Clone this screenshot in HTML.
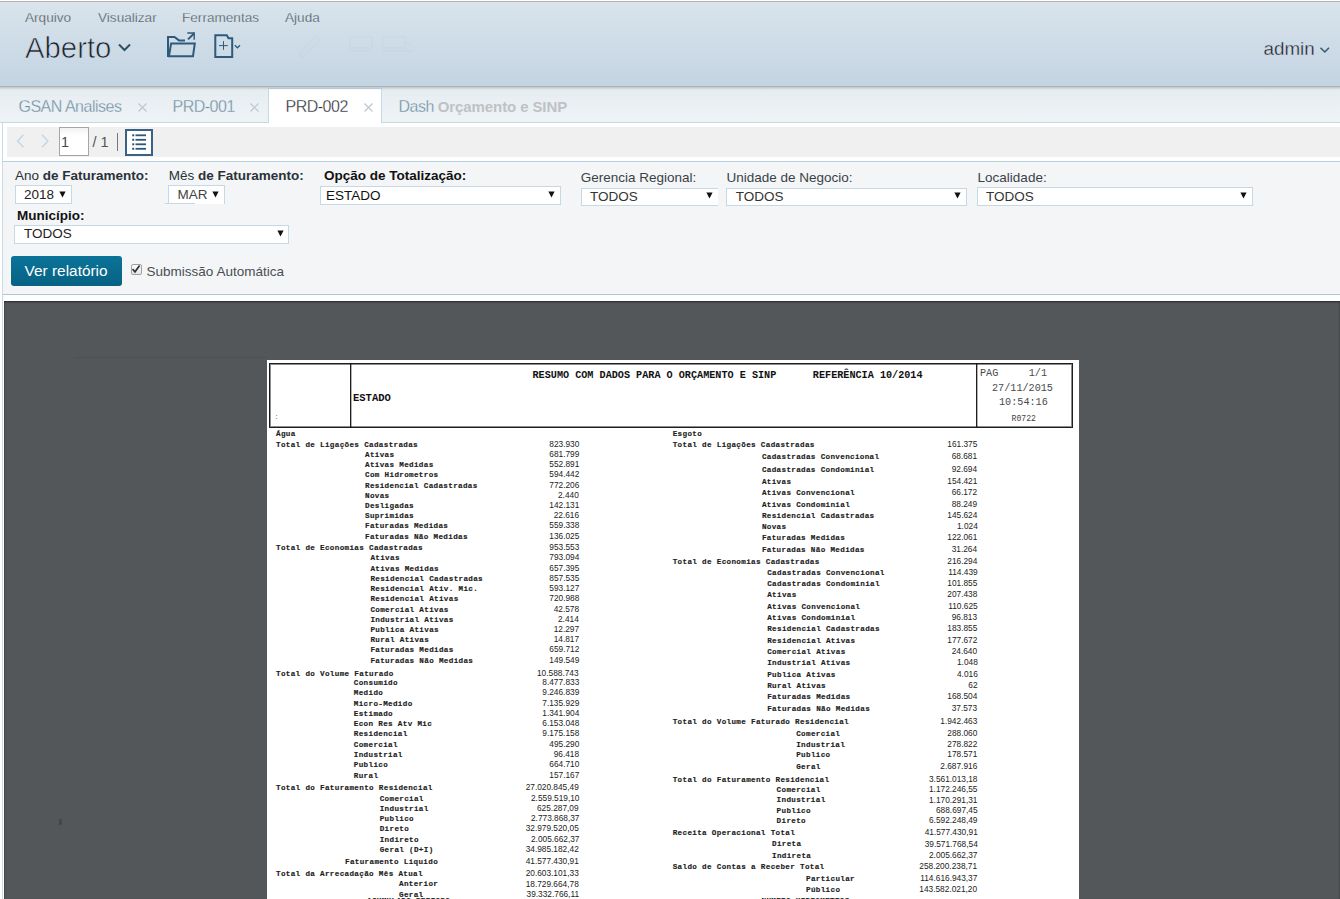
<!DOCTYPE html>
<html><head><meta charset="utf-8">
<style>
*{margin:0;padding:0;box-sizing:border-box}
html,body{width:1340px;height:899px;overflow:hidden;background:#fff;font-family:"Liberation Sans",sans-serif}
.a{position:absolute;white-space:nowrap;line-height:1}
#hdr{position:absolute;left:0;top:1px;width:1340px;height:85px;border-top:1px solid #b6b3b3;background:linear-gradient(#d9e4ec,#c3d4e2)}
#shadow{position:absolute;left:0;top:86px;width:1340px;height:4px;background:linear-gradient(rgba(110,118,124,.6),rgba(110,118,124,.25) 40%,rgba(110,118,124,0))}
.menu{position:absolute;top:8px;font-size:13.6px;color:#555c61}
#tabs{position:absolute;left:0;top:86px;width:1340px;height:37px;background:linear-gradient(#e5ecf0,#eef3f6);border-bottom:1px solid #c3d9e5}
.tab{position:absolute;font-size:15px;color:#6d8da2;top:9px}
.x{position:absolute;width:9px;height:9px;top:17px}
#panel{position:absolute;left:2px;top:123px;width:1338px;height:776px;border-left:1px solid #c8dce8;background:#fff}
#tb{position:absolute;left:7px;top:127px;width:1333px;height:30px;background:#f0f0f0}
#flt{position:absolute;left:3px;top:161px;width:1337px;height:134px;background:#f3f5f7;border-top:1px solid #b7d0de;border-bottom:1px solid #a9c9d8}
.lbl{position:absolute;font-size:13.5px;color:#222;font-weight:bold}
.lbl2{position:absolute;font-size:14px;color:#3a4248}
.sel{position:absolute;background:#fff;border:1px solid #c6d7e5;font-size:13.5px;color:#222}
.sel span{position:absolute}
.arr{position:absolute;top:4px;font-size:9px;color:#111}
#dark{position:absolute;left:4px;top:301px;width:1336px;height:598px;background:#53575a;box-shadow:inset 0 1px 2px rgba(0,0,0,.55)}
</style></head><body>
<div id="hdr"></div>
<svg class="a" style="left:117px;top:42px" width="16" height="11" viewBox="0 0 16 11"><path d="M2 2.5 L7.5 8 L13 2.5" fill="none" stroke="#2d5068" stroke-width="2"/></svg>
<svg class="a" style="left:160px;top:28px" width="40" height="34" viewBox="0 0 40 34">
<g fill="none" stroke="#2f5a7a" stroke-width="2">
<path d="M8 29 V9 H14.5 L19 12.4 H25"/>
<path d="M8 28.2 H33 L34.8 15.4 H11.1 L9 28"/>
<path d="M28 11.4 L34.3 5.2"/>
</g>
<path d="M27.3 4.3 H34.9 V11.8 H33.5 V5.7 H27.3Z" fill="#2f5a7a"/>
</svg>
<svg class="a" style="left:212px;top:32px" width="32" height="28" viewBox="0 0 32 28">
<g fill="none" stroke="#2f5a7a">
<path d="M3.3 25 V3.2 H14.8 L16.5 6.2 H20.2 V25 Z" stroke-width="2"/>
<path d="M7 13.6 H15.8 M11.5 9.1 V17.8" stroke-width="1"/>
<path d="M22.8 13.3 L25.4 15.8 L28 13.3" stroke-width="1.3"/>
</g>
</svg>
<svg class="a" style="left:1318px;top:45px" width="13" height="10" viewBox="0 0 13 10"><path d="M2.5 2.8 L6.8 7 L11 2.8" fill="none" stroke="#3b5b72" stroke-width="1.6"/></svg>
<svg class="a" style="left:290px;top:25px" width="130" height="40" viewBox="0 0 130 40"><g fill="none" stroke="rgba(60,90,110,.018)" stroke-width="2"><path d="M9 30 L25 11 L30 15 L13 32 Z"/><rect x="60" y="12" width="22" height="11"/><path d="M59 26 H83"/><rect x="93" y="12" width="22" height="11"/><path d="M92 26 H122 M115 16 L122 21"/></g></svg>
<div id="tabs">
 <svg class="x" style="left:138px" viewBox="0 0 9 9"><path d="M.5 .5 L8.5 8.5 M8.5 .5 L.5 8.5" stroke="#b9c7d1" stroke-width="1.1"/></svg>
 <svg class="x" style="left:250px" viewBox="0 0 9 9"><path d="M.5 .5 L8.5 8.5 M8.5 .5 L.5 8.5" stroke="#b9c7d1" stroke-width="1.1"/></svg>
 <div class="a" style="left:268px;top:2px;width:114px;height:36px;background:#fff;border:1px solid #c8d9e4;border-bottom:none"></div>
 <svg class="x" style="left:363.5px" viewBox="0 0 9 9"><path d="M.5 .5 L8.5 8.5 M8.5 .5 L.5 8.5" stroke="#b9c7d1" stroke-width="1.1"/></svg>
</div>
<div id="shadow"></div>
<div id="panel"></div>
<div id="tb"></div>
<svg class="a" style="left:14px;top:133px" width="40" height="16" viewBox="0 0 40 16"><path d="M9.5 1.8 L3.6 8 L9.5 14.2 M28 1.8 L33.9 8 L28 14.2" fill="none" stroke="#c3d8e4" stroke-width="1.5"/></svg>
<div class="a" style="left:59px;top:127px;width:30px;height:29px;background:linear-gradient(#f2f2f2,#fff 30%);border:1px solid #a6a6a6"></div>
<div class="a" style="left:117px;top:133px;width:1px;height:18px;background:#777"></div>
<div class="a" style="left:125px;top:129px;width:28px;height:27px;border:2px solid #3a6285;background:#fff"></div>
<svg class="a" style="left:129px;top:133px" width="22" height="20" viewBox="0 0 22 20"><g fill="#2d5678"><rect x="3.2" y="1.3" width="2" height="2"/><rect x="6.5" y="1.4" width="10.5" height="1.8"/><rect x="3.2" y="5.8" width="2" height="2"/><rect x="6.5" y="5.9" width="10.5" height="1.8"/><rect x="3.2" y="10.3" width="2" height="2"/><rect x="6.5" y="10.4" width="10.5" height="1.8"/><rect x="3.2" y="14.8" width="2" height="2"/><rect x="6.5" y="14.9" width="10.5" height="1.8"/></g></svg>
<div id="flt"></div>

<div class="a" style="top:10.69px;font-size:13.6px;font-family:'Liberation Sans',sans-serif;left:25.00px;color:#4f565b;-webkit-text-stroke:.25px #d6e2ea">Arquivo</div>
<div class="a" style="top:10.69px;font-size:13.6px;font-family:'Liberation Sans',sans-serif;left:98.00px;color:#4f565b;-webkit-text-stroke:.25px #d6e2ea">Visualizar</div>
<div class="a" style="top:10.69px;font-size:13.6px;font-family:'Liberation Sans',sans-serif;left:182.00px;color:#4f565b;-webkit-text-stroke:.25px #d6e2ea">Ferramentas</div>
<div class="a" style="top:10.69px;font-size:13.6px;font-family:'Liberation Sans',sans-serif;left:285.00px;color:#4f565b;-webkit-text-stroke:.25px #d6e2ea">Ajuda</div>
<div class="a" style="top:32.80px;font-size:29.3px;font-family:'Liberation Sans',sans-serif;left:25.00px;color:#1c2126;-webkit-text-stroke:.7px #d0dce7">Aberto</div>
<div class="a" style="top:40.29px;font-size:18.8px;font-family:'Liberation Sans',sans-serif;left:1263.50px;color:#1f2428;-webkit-text-stroke:.35px #ccd9e5">admin</div>
<div class="a" style="top:98.86px;font-size:16px;font-family:'Liberation Sans',sans-serif;left:18.50px;color:#6d8da2;letter-spacing:-.5px;-webkit-text-stroke:.3px #e9eff3">GSAN Analises</div>
<div class="a" style="top:98.86px;font-size:16px;font-family:'Liberation Sans',sans-serif;left:172.50px;color:#6d8da2;letter-spacing:-.5px;-webkit-text-stroke:.3px #e9eff3">PRD-001</div>
<div class="a" style="top:98.86px;font-size:16px;font-family:'Liberation Sans',sans-serif;left:285.50px;color:#1f2a32;letter-spacing:-.5px;-webkit-text-stroke:.3px #fff">PRD-002</div>
<div class="a" style="top:98.86px;font-size:16px;font-family:'Liberation Sans',sans-serif;left:398.50px;color:#6d8da2;letter-spacing:-.5px;-webkit-text-stroke:.3px #e9eff3">Dash <b style="color:#bfc2c5;letter-spacing:-.1px;font-size:15px;-webkit-text-stroke:0">Orçamento e SINP</b></div>
<div class="a" style="top:134.93px;font-size:14.5px;font-family:'Liberation Sans',sans-serif;left:61.00px;color:#4a4a4a;">1</div>
<div class="a" style="top:134.93px;font-size:14.5px;font-family:'Liberation Sans',sans-serif;left:92.50px;color:#555;">/ 1</div>
<div class="a" style="top:168.97px;font-size:13.5px;font-family:'Liberation Sans',sans-serif;left:15.00px;color:#2a3238;">Ano <b>de Faturamento:</b></div>
<div class="a" style="top:169.17px;font-size:13.5px;font-family:'Liberation Sans',sans-serif;left:168.80px;color:#2a3238;">Mês <b>de Faturamento:</b></div>
<div class="a" style="top:169.17px;font-size:13.5px;font-family:'Liberation Sans',sans-serif;left:324.00px;color:#111;"><b>Opção de Totalização:</b></div>
<div class="a" style="top:209.17px;font-size:13.5px;font-family:'Liberation Sans',sans-serif;left:17.00px;color:#111;"><b>Município:</b></div>
<div class="a" style="top:171.47px;font-size:13.5px;font-family:'Liberation Sans',sans-serif;left:580.70px;color:#3a4248;">Gerencia Regional:</div>
<div class="a" style="top:171.47px;font-size:13.5px;font-family:'Liberation Sans',sans-serif;left:726.50px;color:#3a4248;">Unidade de Negocio:</div>
<div class="a" style="top:171.47px;font-size:13.5px;font-family:'Liberation Sans',sans-serif;left:977.60px;color:#3a4248;">Localidade:</div>
<div class="a" style="left:15px;top:185px;width:57px;height:19px;background:#fff;border:1px solid #c6d7e5;"></div>
<div class="a" style="top:187.57px;font-size:13.5px;font-family:'Liberation Sans',sans-serif;left:24.00px;color:#222;">2018</div>
<svg class="a" style="left:58.5px;top:190.5px" width="7" height="7" viewBox="0 0 7 7"><path d="M0.4 0.6 H6.6 L3.5 6.6Z" fill="#111"/></svg>
<div class="a" style="left:168px;top:185px;width:57px;height:18.5px;background:#fff;border:1px solid #c6d7e5;border-bottom:none"></div>
<div class="a" style="left:165px;top:203px;width:30px;height:1px;background:#c6d7e5"></div>
<div class="a" style="top:187.57px;font-size:13.5px;font-family:'Liberation Sans',sans-serif;left:177.50px;color:#444;">MAR</div>
<svg class="a" style="left:212px;top:190.5px" width="7" height="7" viewBox="0 0 7 7"><path d="M0.4 0.6 H6.6 L3.5 6.6Z" fill="#111"/></svg>
<div class="a" style="left:320px;top:186px;width:241px;height:19px;background:#fff;border:1px solid #c6d7e5;"></div>
<div class="a" style="top:188.57px;font-size:13.5px;font-family:'Liberation Sans',sans-serif;left:326.00px;color:#111;">ESTADO</div>
<svg class="a" style="left:547.5px;top:191.0px" width="7" height="7" viewBox="0 0 7 7"><path d="M0.4 0.6 H6.6 L3.5 6.6Z" fill="#111"/></svg>
<div class="a" style="left:580.5px;top:187.5px;width:137.5px;height:18.5px;background:#fff;border:1px solid #c6d7e5;border-right:none"></div>
<div class="a" style="top:189.57px;font-size:13.5px;font-family:'Liberation Sans',sans-serif;left:590.00px;color:#333;">TODOS</div>
<svg class="a" style="left:705.5px;top:192.0px" width="7" height="7" viewBox="0 0 7 7"><path d="M0.4 0.6 H6.6 L3.5 6.6Z" fill="#111"/></svg>
<div class="a" style="left:726px;top:187.5px;width:241px;height:18.5px;background:#fff;border:1px solid #c6d7e5;"></div>
<div class="a" style="top:189.57px;font-size:13.5px;font-family:'Liberation Sans',sans-serif;left:735.70px;color:#333;">TODOS</div>
<svg class="a" style="left:953.5px;top:192.0px" width="7" height="7" viewBox="0 0 7 7"><path d="M0.4 0.6 H6.6 L3.5 6.6Z" fill="#111"/></svg>
<div class="a" style="left:977px;top:187px;width:276px;height:19px;background:#fff;border:1px solid #c6d7e5;"></div>
<div class="a" style="top:189.57px;font-size:13.5px;font-family:'Liberation Sans',sans-serif;left:986.00px;color:#333;">TODOS</div>
<svg class="a" style="left:1239.5px;top:191.5px" width="7" height="7" viewBox="0 0 7 7"><path d="M0.4 0.6 H6.6 L3.5 6.6Z" fill="#111"/></svg>
<div class="a" style="left:14px;top:225px;width:275px;height:19px;background:#fff;border:1px solid #c6d7e5;"></div>
<div class="a" style="top:227.17px;font-size:13.5px;font-family:'Liberation Sans',sans-serif;left:24.00px;color:#222;">TODOS</div>
<svg class="a" style="left:276.5px;top:229.5px" width="7" height="7" viewBox="0 0 7 7"><path d="M0.4 0.6 H6.6 L3.5 6.6Z" fill="#111"/></svg>
<div class="a" style="left:11px;top:256px;width:111px;height:30px;border-radius:3px;background:linear-gradient(#0b7399,#076283)"></div>
<div class="a" style="top:262.86px;font-size:15.4px;font-family:'Liberation Sans',sans-serif;left:24.60px;color:#fff;">Ver relatório</div>
<div class="a" style="left:130.5px;top:264px;width:11px;height:11px;border:1px solid #a0a0a0;border-radius:2px;background:linear-gradient(#fdfdfd,#e6e6e6)"></div>
<svg class="a" style="left:130px;top:263px" width="12" height="12" viewBox="0 0 12 12"><path d="M2.6 6.2 L5 8.8 L9.6 2.4" fill="none" stroke="#333" stroke-width="1.7"/></svg>
<div class="a" style="top:264.57px;font-size:13.5px;font-family:'Liberation Sans',sans-serif;left:146.60px;color:#4a4f53;">Submissão Automática</div>
<div id="dark"></div>
<div class="a" style="left:74px;top:357px;width:193px;height:1px;background:#4d5154"></div>
<div class="a" style="left:59px;top:819px;width:3px;height:6px;background:#44474a"></div>
<div class="a" style="left:267px;top:360px;width:812px;height:539px;background:#fff"></div>
<div class="a" style="left:269px;top:363px;width:804px;height:65px;border:1px solid #1e1e1e;box-shadow:inset 0 0 0 1px rgba(0,0,0,.45)"></div>
<div class="a" style="left:350px;top:363px;width:1px;height:65px;background:#1e1e1e;box-shadow:1px 0 0 rgba(0,0,0,.3)"></div>
<div class="a" style="left:976px;top:363px;width:1px;height:65px;background:#1e1e1e;box-shadow:1px 0 0 rgba(0,0,0,.3)"></div>
<div class="a" style="top:413.64px;font-size:7px;font-family:'Liberation Mono',monospace;left:274.50px;color:#777;">:</div>
<div class="a" style="top:393.46px;font-size:10.5px;font-family:'Liberation Mono',monospace;left:353.00px;font-weight:bold;color:#111;">ESTADO</div>
<div class="a" style="top:370.91px;font-size:10.17px;font-family:'Liberation Mono',monospace;left:532.50px;font-weight:bold;color:#111;white-space:pre">RESUMO COM DADOS PARA O ORÇAMENTO E SINP      REFERÊNCIA 10/2014</div>
<div class="a" style="top:369.21px;font-size:10.17px;font-family:'Liberation Mono',monospace;left:980.00px;color:#4a4a4a;white-space:pre">PAG     1/1</div>
<div class="a" style="top:383.71px;font-size:10.17px;font-family:'Liberation Mono',monospace;left:992.00px;color:#4a4a4a;">27/11/2015</div>
<div class="a" style="top:398.21px;font-size:10.17px;font-family:'Liberation Mono',monospace;left:999.00px;color:#4a4a4a;">10:54:16</div>
<div class="a" style="top:414.74px;font-size:8.17px;font-family:'Liberation Mono',monospace;left:1011.50px;color:#444;">R0722</div>
<div class="a" style="top:431.18px;font-size:7.6px;font-family:'Liberation Mono',monospace;left:276.00px;font-weight:bold;color:#1c1c1c;letter-spacing:.34px;-webkit-text-stroke:.15px #1c1c1c">Água</div>
<div class="a" style="top:441.68px;font-size:7.6px;font-family:'Liberation Mono',monospace;left:276.00px;font-weight:bold;color:#1c1c1c;letter-spacing:.34px;-webkit-text-stroke:.15px #1c1c1c">Total de Ligações Cadastradas</div>
<div class="a" style="top:438.76px;font-size:9.5px;font-family:'Liberation Sans',sans-serif;right:761.00px;color:#222;transform:scaleX(.874);transform-origin:100% 50%">823.930</div>
<div class="a" style="top:451.88px;font-size:7.6px;font-family:'Liberation Mono',monospace;left:365.00px;font-weight:bold;color:#1c1c1c;letter-spacing:.34px;-webkit-text-stroke:.15px #1c1c1c">Ativas</div>
<div class="a" style="top:448.96px;font-size:9.5px;font-family:'Liberation Sans',sans-serif;right:761.00px;color:#222;transform:scaleX(.874);transform-origin:100% 50%">681.799</div>
<div class="a" style="top:461.68px;font-size:7.6px;font-family:'Liberation Mono',monospace;left:365.00px;font-weight:bold;color:#1c1c1c;letter-spacing:.34px;-webkit-text-stroke:.15px #1c1c1c">Ativas Medidas</div>
<div class="a" style="top:458.76px;font-size:9.5px;font-family:'Liberation Sans',sans-serif;right:761.00px;color:#222;transform:scaleX(.874);transform-origin:100% 50%">552.891</div>
<div class="a" style="top:471.88px;font-size:7.6px;font-family:'Liberation Mono',monospace;left:365.00px;font-weight:bold;color:#1c1c1c;letter-spacing:.34px;-webkit-text-stroke:.15px #1c1c1c">Com Hidrometros</div>
<div class="a" style="top:468.96px;font-size:9.5px;font-family:'Liberation Sans',sans-serif;right:761.00px;color:#222;transform:scaleX(.874);transform-origin:100% 50%">594.442</div>
<div class="a" style="top:482.63px;font-size:7.6px;font-family:'Liberation Mono',monospace;left:365.00px;font-weight:bold;color:#1c1c1c;letter-spacing:.34px;-webkit-text-stroke:.15px #1c1c1c">Residencial Cadastradas</div>
<div class="a" style="top:479.71px;font-size:9.5px;font-family:'Liberation Sans',sans-serif;right:761.00px;color:#222;transform:scaleX(.874);transform-origin:100% 50%">772.206</div>
<div class="a" style="top:493.08px;font-size:7.6px;font-family:'Liberation Mono',monospace;left:365.00px;font-weight:bold;color:#1c1c1c;letter-spacing:.34px;-webkit-text-stroke:.15px #1c1c1c">Novas</div>
<div class="a" style="top:490.16px;font-size:9.5px;font-family:'Liberation Sans',sans-serif;right:761.00px;color:#222;transform:scaleX(.874);transform-origin:100% 50%">2.440</div>
<div class="a" style="top:502.68px;font-size:7.6px;font-family:'Liberation Mono',monospace;left:365.00px;font-weight:bold;color:#1c1c1c;letter-spacing:.34px;-webkit-text-stroke:.15px #1c1c1c">Desligadas</div>
<div class="a" style="top:499.76px;font-size:9.5px;font-family:'Liberation Sans',sans-serif;right:761.00px;color:#222;transform:scaleX(.874);transform-origin:100% 50%">142.131</div>
<div class="a" style="top:512.68px;font-size:7.6px;font-family:'Liberation Mono',monospace;left:365.00px;font-weight:bold;color:#1c1c1c;letter-spacing:.34px;-webkit-text-stroke:.15px #1c1c1c">Suprimidas</div>
<div class="a" style="top:509.76px;font-size:9.5px;font-family:'Liberation Sans',sans-serif;right:761.00px;color:#222;transform:scaleX(.874);transform-origin:100% 50%">22.616</div>
<div class="a" style="top:523.38px;font-size:7.6px;font-family:'Liberation Mono',monospace;left:365.00px;font-weight:bold;color:#1c1c1c;letter-spacing:.34px;-webkit-text-stroke:.15px #1c1c1c">Faturadas Medidas</div>
<div class="a" style="top:520.46px;font-size:9.5px;font-family:'Liberation Sans',sans-serif;right:761.00px;color:#222;transform:scaleX(.874);transform-origin:100% 50%">559.338</div>
<div class="a" style="top:534.08px;font-size:7.6px;font-family:'Liberation Mono',monospace;left:365.00px;font-weight:bold;color:#1c1c1c;letter-spacing:.34px;-webkit-text-stroke:.15px #1c1c1c">Faturadas Não Medidas</div>
<div class="a" style="top:531.16px;font-size:9.5px;font-family:'Liberation Sans',sans-serif;right:761.00px;color:#222;transform:scaleX(.874);transform-origin:100% 50%">136.025</div>
<div class="a" style="top:544.58px;font-size:7.6px;font-family:'Liberation Mono',monospace;left:276.00px;font-weight:bold;color:#1c1c1c;letter-spacing:.34px;-webkit-text-stroke:.15px #1c1c1c">Total de Economias Cadastradas</div>
<div class="a" style="top:541.66px;font-size:9.5px;font-family:'Liberation Sans',sans-serif;right:761.00px;color:#222;transform:scaleX(.874);transform-origin:100% 50%">953.553</div>
<div class="a" style="top:554.98px;font-size:7.6px;font-family:'Liberation Mono',monospace;left:370.40px;font-weight:bold;color:#1c1c1c;letter-spacing:.34px;-webkit-text-stroke:.15px #1c1c1c">Ativas</div>
<div class="a" style="top:552.06px;font-size:9.5px;font-family:'Liberation Sans',sans-serif;right:761.00px;color:#222;transform:scaleX(.874);transform-origin:100% 50%">793.094</div>
<div class="a" style="top:565.68px;font-size:7.6px;font-family:'Liberation Mono',monospace;left:370.40px;font-weight:bold;color:#1c1c1c;letter-spacing:.34px;-webkit-text-stroke:.15px #1c1c1c">Ativas Medidas</div>
<div class="a" style="top:562.76px;font-size:9.5px;font-family:'Liberation Sans',sans-serif;right:761.00px;color:#222;transform:scaleX(.874);transform-origin:100% 50%">657.395</div>
<div class="a" style="top:575.88px;font-size:7.6px;font-family:'Liberation Mono',monospace;left:370.40px;font-weight:bold;color:#1c1c1c;letter-spacing:.34px;-webkit-text-stroke:.15px #1c1c1c">Residencial Cadastradas</div>
<div class="a" style="top:572.96px;font-size:9.5px;font-family:'Liberation Sans',sans-serif;right:761.00px;color:#222;transform:scaleX(.874);transform-origin:100% 50%">857.535</div>
<div class="a" style="top:585.68px;font-size:7.6px;font-family:'Liberation Mono',monospace;left:370.40px;font-weight:bold;color:#1c1c1c;letter-spacing:.34px;-webkit-text-stroke:.15px #1c1c1c">Residencial Ativ. Mic.</div>
<div class="a" style="top:582.76px;font-size:9.5px;font-family:'Liberation Sans',sans-serif;right:761.00px;color:#222;transform:scaleX(.874);transform-origin:100% 50%">593.127</div>
<div class="a" style="top:596.28px;font-size:7.6px;font-family:'Liberation Mono',monospace;left:370.40px;font-weight:bold;color:#1c1c1c;letter-spacing:.34px;-webkit-text-stroke:.15px #1c1c1c">Residencial Ativas</div>
<div class="a" style="top:593.36px;font-size:9.5px;font-family:'Liberation Sans',sans-serif;right:761.00px;color:#222;transform:scaleX(.874);transform-origin:100% 50%">720.988</div>
<div class="a" style="top:606.68px;font-size:7.6px;font-family:'Liberation Mono',monospace;left:370.40px;font-weight:bold;color:#1c1c1c;letter-spacing:.34px;-webkit-text-stroke:.15px #1c1c1c">Comercial Ativas</div>
<div class="a" style="top:603.76px;font-size:9.5px;font-family:'Liberation Sans',sans-serif;right:761.00px;color:#222;transform:scaleX(.874);transform-origin:100% 50%">42.578</div>
<div class="a" style="top:616.88px;font-size:7.6px;font-family:'Liberation Mono',monospace;left:370.40px;font-weight:bold;color:#1c1c1c;letter-spacing:.34px;-webkit-text-stroke:.15px #1c1c1c">Industrial Ativas</div>
<div class="a" style="top:613.96px;font-size:9.5px;font-family:'Liberation Sans',sans-serif;right:761.00px;color:#222;transform:scaleX(.874);transform-origin:100% 50%">2.414</div>
<div class="a" style="top:626.68px;font-size:7.6px;font-family:'Liberation Mono',monospace;left:370.40px;font-weight:bold;color:#1c1c1c;letter-spacing:.34px;-webkit-text-stroke:.15px #1c1c1c">Publica Ativas</div>
<div class="a" style="top:623.76px;font-size:9.5px;font-family:'Liberation Sans',sans-serif;right:761.00px;color:#222;transform:scaleX(.874);transform-origin:100% 50%">12.297</div>
<div class="a" style="top:637.38px;font-size:7.6px;font-family:'Liberation Mono',monospace;left:370.40px;font-weight:bold;color:#1c1c1c;letter-spacing:.34px;-webkit-text-stroke:.15px #1c1c1c">Rural Ativas</div>
<div class="a" style="top:634.46px;font-size:9.5px;font-family:'Liberation Sans',sans-serif;right:761.00px;color:#222;transform:scaleX(.874);transform-origin:100% 50%">14.817</div>
<div class="a" style="top:647.38px;font-size:7.6px;font-family:'Liberation Mono',monospace;left:370.40px;font-weight:bold;color:#1c1c1c;letter-spacing:.34px;-webkit-text-stroke:.15px #1c1c1c">Faturadas Medidas</div>
<div class="a" style="top:644.46px;font-size:9.5px;font-family:'Liberation Sans',sans-serif;right:761.00px;color:#222;transform:scaleX(.874);transform-origin:100% 50%">659.712</div>
<div class="a" style="top:657.88px;font-size:7.6px;font-family:'Liberation Mono',monospace;left:370.40px;font-weight:bold;color:#1c1c1c;letter-spacing:.34px;-webkit-text-stroke:.15px #1c1c1c">Faturadas Não Medidas</div>
<div class="a" style="top:654.96px;font-size:9.5px;font-family:'Liberation Sans',sans-serif;right:761.00px;color:#222;transform:scaleX(.874);transform-origin:100% 50%">149.549</div>
<div class="a" style="top:670.58px;font-size:7.6px;font-family:'Liberation Mono',monospace;left:276.00px;font-weight:bold;color:#1c1c1c;letter-spacing:.34px;-webkit-text-stroke:.15px #1c1c1c">Total do Volume Faturado</div>
<div class="a" style="top:667.66px;font-size:9.5px;font-family:'Liberation Sans',sans-serif;right:761.00px;color:#222;transform:scaleX(.874);transform-origin:100% 50%">10.588.743</div>
<div class="a" style="top:679.88px;font-size:7.6px;font-family:'Liberation Mono',monospace;left:353.80px;font-weight:bold;color:#1c1c1c;letter-spacing:.34px;-webkit-text-stroke:.15px #1c1c1c">Consumido</div>
<div class="a" style="top:676.96px;font-size:9.5px;font-family:'Liberation Sans',sans-serif;right:761.00px;color:#222;transform:scaleX(.874);transform-origin:100% 50%">8.477.833</div>
<div class="a" style="top:690.38px;font-size:7.6px;font-family:'Liberation Mono',monospace;left:353.80px;font-weight:bold;color:#1c1c1c;letter-spacing:.34px;-webkit-text-stroke:.15px #1c1c1c">Medido</div>
<div class="a" style="top:687.46px;font-size:9.5px;font-family:'Liberation Sans',sans-serif;right:761.00px;color:#222;transform:scaleX(.874);transform-origin:100% 50%">9.246.839</div>
<div class="a" style="top:700.98px;font-size:7.6px;font-family:'Liberation Mono',monospace;left:353.80px;font-weight:bold;color:#1c1c1c;letter-spacing:.34px;-webkit-text-stroke:.15px #1c1c1c">Micro-Medido</div>
<div class="a" style="top:698.06px;font-size:9.5px;font-family:'Liberation Sans',sans-serif;right:761.00px;color:#222;transform:scaleX(.874);transform-origin:100% 50%">7.135.929</div>
<div class="a" style="top:711.28px;font-size:7.6px;font-family:'Liberation Mono',monospace;left:353.80px;font-weight:bold;color:#1c1c1c;letter-spacing:.34px;-webkit-text-stroke:.15px #1c1c1c">Estimado</div>
<div class="a" style="top:708.36px;font-size:9.5px;font-family:'Liberation Sans',sans-serif;right:761.00px;color:#222;transform:scaleX(.874);transform-origin:100% 50%">1.341.904</div>
<div class="a" style="top:721.28px;font-size:7.6px;font-family:'Liberation Mono',monospace;left:353.80px;font-weight:bold;color:#1c1c1c;letter-spacing:.34px;-webkit-text-stroke:.15px #1c1c1c">Econ Res Atv Mic</div>
<div class="a" style="top:718.36px;font-size:9.5px;font-family:'Liberation Sans',sans-serif;right:761.00px;color:#222;transform:scaleX(.874);transform-origin:100% 50%">6.153.048</div>
<div class="a" style="top:731.38px;font-size:7.6px;font-family:'Liberation Mono',monospace;left:353.80px;font-weight:bold;color:#1c1c1c;letter-spacing:.34px;-webkit-text-stroke:.15px #1c1c1c">Residencial</div>
<div class="a" style="top:728.46px;font-size:9.5px;font-family:'Liberation Sans',sans-serif;right:761.00px;color:#222;transform:scaleX(.874);transform-origin:100% 50%">9.175.158</div>
<div class="a" style="top:741.98px;font-size:7.6px;font-family:'Liberation Mono',monospace;left:353.80px;font-weight:bold;color:#1c1c1c;letter-spacing:.34px;-webkit-text-stroke:.15px #1c1c1c">Comercial</div>
<div class="a" style="top:739.06px;font-size:9.5px;font-family:'Liberation Sans',sans-serif;right:761.00px;color:#222;transform:scaleX(.874);transform-origin:100% 50%">495.290</div>
<div class="a" style="top:752.38px;font-size:7.6px;font-family:'Liberation Mono',monospace;left:353.80px;font-weight:bold;color:#1c1c1c;letter-spacing:.34px;-webkit-text-stroke:.15px #1c1c1c">Industrial</div>
<div class="a" style="top:749.46px;font-size:9.5px;font-family:'Liberation Sans',sans-serif;right:761.00px;color:#222;transform:scaleX(.874);transform-origin:100% 50%">96.418</div>
<div class="a" style="top:762.18px;font-size:7.6px;font-family:'Liberation Mono',monospace;left:353.80px;font-weight:bold;color:#1c1c1c;letter-spacing:.34px;-webkit-text-stroke:.15px #1c1c1c">Publico</div>
<div class="a" style="top:759.26px;font-size:9.5px;font-family:'Liberation Sans',sans-serif;right:761.00px;color:#222;transform:scaleX(.874);transform-origin:100% 50%">664.710</div>
<div class="a" style="top:772.58px;font-size:7.6px;font-family:'Liberation Mono',monospace;left:353.80px;font-weight:bold;color:#1c1c1c;letter-spacing:.34px;-webkit-text-stroke:.15px #1c1c1c">Rural</div>
<div class="a" style="top:769.66px;font-size:9.5px;font-family:'Liberation Sans',sans-serif;right:761.00px;color:#222;transform:scaleX(.874);transform-origin:100% 50%">157.167</div>
<div class="a" style="top:785.28px;font-size:7.6px;font-family:'Liberation Mono',monospace;left:276.00px;font-weight:bold;color:#1c1c1c;letter-spacing:.34px;-webkit-text-stroke:.15px #1c1c1c">Total do Faturamento Residencial</div>
<div class="a" style="top:782.36px;font-size:9.5px;font-family:'Liberation Sans',sans-serif;right:761.00px;color:#222;transform:scaleX(.874);transform-origin:100% 50%">27.020.845,49</div>
<div class="a" style="top:795.58px;font-size:7.6px;font-family:'Liberation Mono',monospace;left:379.70px;font-weight:bold;color:#1c1c1c;letter-spacing:.34px;-webkit-text-stroke:.15px #1c1c1c">Comercial</div>
<div class="a" style="top:792.66px;font-size:9.5px;font-family:'Liberation Sans',sans-serif;right:761.00px;color:#222;transform:scaleX(.874);transform-origin:100% 50%">2.559.519,10</div>
<div class="a" style="top:805.98px;font-size:7.6px;font-family:'Liberation Mono',monospace;left:379.70px;font-weight:bold;color:#1c1c1c;letter-spacing:.34px;-webkit-text-stroke:.15px #1c1c1c">Industrial</div>
<div class="a" style="top:803.06px;font-size:9.5px;font-family:'Liberation Sans',sans-serif;right:761.00px;color:#222;transform:scaleX(.874);transform-origin:100% 50%">625.287,09</div>
<div class="a" style="top:815.58px;font-size:7.6px;font-family:'Liberation Mono',monospace;left:379.70px;font-weight:bold;color:#1c1c1c;letter-spacing:.34px;-webkit-text-stroke:.15px #1c1c1c">Publico</div>
<div class="a" style="top:812.66px;font-size:9.5px;font-family:'Liberation Sans',sans-serif;right:761.00px;color:#222;transform:scaleX(.874);transform-origin:100% 50%">2.773.868,37</div>
<div class="a" style="top:825.98px;font-size:7.6px;font-family:'Liberation Mono',monospace;left:379.70px;font-weight:bold;color:#1c1c1c;letter-spacing:.34px;-webkit-text-stroke:.15px #1c1c1c">Direto</div>
<div class="a" style="top:823.06px;font-size:9.5px;font-family:'Liberation Sans',sans-serif;right:761.00px;color:#222;transform:scaleX(.874);transform-origin:100% 50%">32.979.520,05</div>
<div class="a" style="top:836.68px;font-size:7.6px;font-family:'Liberation Mono',monospace;left:379.70px;font-weight:bold;color:#1c1c1c;letter-spacing:.34px;-webkit-text-stroke:.15px #1c1c1c">Indireto</div>
<div class="a" style="top:833.76px;font-size:9.5px;font-family:'Liberation Sans',sans-serif;right:761.00px;color:#222;transform:scaleX(.874);transform-origin:100% 50%">2.005.662,37</div>
<div class="a" style="top:846.88px;font-size:7.6px;font-family:'Liberation Mono',monospace;left:379.70px;font-weight:bold;color:#1c1c1c;letter-spacing:.34px;-webkit-text-stroke:.15px #1c1c1c">Geral (D+I)</div>
<div class="a" style="top:843.96px;font-size:9.5px;font-family:'Liberation Sans',sans-serif;right:761.00px;color:#222;transform:scaleX(.874);transform-origin:100% 50%">34.985.182,42</div>
<div class="a" style="top:858.58px;font-size:7.6px;font-family:'Liberation Mono',monospace;left:345.00px;font-weight:bold;color:#1c1c1c;letter-spacing:.34px;-webkit-text-stroke:.15px #1c1c1c">Faturamento Liquido</div>
<div class="a" style="top:855.66px;font-size:9.5px;font-family:'Liberation Sans',sans-serif;right:761.00px;color:#222;transform:scaleX(.874);transform-origin:100% 50%">41.577.430,91</div>
<div class="a" style="top:870.68px;font-size:7.6px;font-family:'Liberation Mono',monospace;left:276.00px;font-weight:bold;color:#1c1c1c;letter-spacing:.34px;-webkit-text-stroke:.15px #1c1c1c">Total da Arrecadação Mês Atual</div>
<div class="a" style="top:867.76px;font-size:9.5px;font-family:'Liberation Sans',sans-serif;right:761.00px;color:#222;transform:scaleX(.874);transform-origin:100% 50%">20.603.101,33</div>
<div class="a" style="top:881.48px;font-size:7.6px;font-family:'Liberation Mono',monospace;left:399.00px;font-weight:bold;color:#1c1c1c;letter-spacing:.34px;-webkit-text-stroke:.15px #1c1c1c">Anterior</div>
<div class="a" style="top:878.56px;font-size:9.5px;font-family:'Liberation Sans',sans-serif;right:761.00px;color:#222;transform:scaleX(.874);transform-origin:100% 50%">18.729.664,78</div>
<div class="a" style="top:891.58px;font-size:7.6px;font-family:'Liberation Mono',monospace;left:399.00px;font-weight:bold;color:#1c1c1c;letter-spacing:.34px;-webkit-text-stroke:.15px #1c1c1c">Geral</div>
<div class="a" style="top:888.66px;font-size:9.5px;font-family:'Liberation Sans',sans-serif;right:761.00px;color:#222;transform:scaleX(.874);transform-origin:100% 50%">39.332.766,11</div>
<div class="a" style="top:898.48px;font-size:7.6px;font-family:'Liberation Mono',monospace;left:367.00px;font-weight:bold;color:#1c1c1c;letter-spacing:.34px;-webkit-text-stroke:.15px #1c1c1c">ACUMULADO PERIODO</div>
<div class="a" style="top:430.78px;font-size:7.6px;font-family:'Liberation Mono',monospace;left:672.70px;font-weight:bold;color:#1c1c1c;letter-spacing:.34px;-webkit-text-stroke:.15px #1c1c1c">Esgoto</div>
<div class="a" style="top:442.28px;font-size:7.6px;font-family:'Liberation Mono',monospace;left:672.70px;font-weight:bold;color:#1c1c1c;letter-spacing:.34px;-webkit-text-stroke:.15px #1c1c1c">Total de Ligações Cadastradas</div>
<div class="a" style="top:439.36px;font-size:9.5px;font-family:'Liberation Sans',sans-serif;right:362.50px;color:#222;transform:scaleX(.874);transform-origin:100% 50%">161.375</div>
<div class="a" style="top:453.88px;font-size:7.6px;font-family:'Liberation Mono',monospace;left:761.90px;font-weight:bold;color:#1c1c1c;letter-spacing:.34px;-webkit-text-stroke:.15px #1c1c1c">Cadastradas Convencional</div>
<div class="a" style="top:450.96px;font-size:9.5px;font-family:'Liberation Sans',sans-serif;right:362.50px;color:#222;transform:scaleX(.874);transform-origin:100% 50%">68.681</div>
<div class="a" style="top:466.58px;font-size:7.6px;font-family:'Liberation Mono',monospace;left:761.90px;font-weight:bold;color:#1c1c1c;letter-spacing:.34px;-webkit-text-stroke:.15px #1c1c1c">Cadastradas Condominial</div>
<div class="a" style="top:463.66px;font-size:9.5px;font-family:'Liberation Sans',sans-serif;right:362.50px;color:#222;transform:scaleX(.874);transform-origin:100% 50%">92.694</div>
<div class="a" style="top:478.58px;font-size:7.6px;font-family:'Liberation Mono',monospace;left:761.90px;font-weight:bold;color:#1c1c1c;letter-spacing:.34px;-webkit-text-stroke:.15px #1c1c1c">Ativas</div>
<div class="a" style="top:475.66px;font-size:9.5px;font-family:'Liberation Sans',sans-serif;right:362.50px;color:#222;transform:scaleX(.874);transform-origin:100% 50%">154.421</div>
<div class="a" style="top:490.38px;font-size:7.6px;font-family:'Liberation Mono',monospace;left:761.90px;font-weight:bold;color:#1c1c1c;letter-spacing:.34px;-webkit-text-stroke:.15px #1c1c1c">Ativas Convencional</div>
<div class="a" style="top:487.46px;font-size:9.5px;font-family:'Liberation Sans',sans-serif;right:362.50px;color:#222;transform:scaleX(.874);transform-origin:100% 50%">66.172</div>
<div class="a" style="top:501.58px;font-size:7.6px;font-family:'Liberation Mono',monospace;left:761.90px;font-weight:bold;color:#1c1c1c;letter-spacing:.34px;-webkit-text-stroke:.15px #1c1c1c">Ativas Condominial</div>
<div class="a" style="top:498.66px;font-size:9.5px;font-family:'Liberation Sans',sans-serif;right:362.50px;color:#222;transform:scaleX(.874);transform-origin:100% 50%">88.249</div>
<div class="a" style="top:512.88px;font-size:7.6px;font-family:'Liberation Mono',monospace;left:761.90px;font-weight:bold;color:#1c1c1c;letter-spacing:.34px;-webkit-text-stroke:.15px #1c1c1c">Residencial Cadastradas</div>
<div class="a" style="top:509.96px;font-size:9.5px;font-family:'Liberation Sans',sans-serif;right:362.50px;color:#222;transform:scaleX(.874);transform-origin:100% 50%">145.624</div>
<div class="a" style="top:523.78px;font-size:7.6px;font-family:'Liberation Mono',monospace;left:761.90px;font-weight:bold;color:#1c1c1c;letter-spacing:.34px;-webkit-text-stroke:.15px #1c1c1c">Novas</div>
<div class="a" style="top:520.86px;font-size:9.5px;font-family:'Liberation Sans',sans-serif;right:362.50px;color:#222;transform:scaleX(.874);transform-origin:100% 50%">1.024</div>
<div class="a" style="top:534.98px;font-size:7.6px;font-family:'Liberation Mono',monospace;left:761.90px;font-weight:bold;color:#1c1c1c;letter-spacing:.34px;-webkit-text-stroke:.15px #1c1c1c">Faturadas Medidas</div>
<div class="a" style="top:532.06px;font-size:9.5px;font-family:'Liberation Sans',sans-serif;right:362.50px;color:#222;transform:scaleX(.874);transform-origin:100% 50%">122.061</div>
<div class="a" style="top:546.58px;font-size:7.6px;font-family:'Liberation Mono',monospace;left:761.90px;font-weight:bold;color:#1c1c1c;letter-spacing:.34px;-webkit-text-stroke:.15px #1c1c1c">Faturadas Não Medidas</div>
<div class="a" style="top:543.66px;font-size:9.5px;font-family:'Liberation Sans',sans-serif;right:362.50px;color:#222;transform:scaleX(.874);transform-origin:100% 50%">31.264</div>
<div class="a" style="top:558.58px;font-size:7.6px;font-family:'Liberation Mono',monospace;left:672.70px;font-weight:bold;color:#1c1c1c;letter-spacing:.34px;-webkit-text-stroke:.15px #1c1c1c">Total de Economias Cadastradas</div>
<div class="a" style="top:555.66px;font-size:9.5px;font-family:'Liberation Sans',sans-serif;right:362.50px;color:#222;transform:scaleX(.874);transform-origin:100% 50%">216.294</div>
<div class="a" style="top:570.18px;font-size:7.6px;font-family:'Liberation Mono',monospace;left:767.20px;font-weight:bold;color:#1c1c1c;letter-spacing:.34px;-webkit-text-stroke:.15px #1c1c1c">Cadastradas Convencional</div>
<div class="a" style="top:567.26px;font-size:9.5px;font-family:'Liberation Sans',sans-serif;right:362.50px;color:#222;transform:scaleX(.874);transform-origin:100% 50%">114.439</div>
<div class="a" style="top:581.28px;font-size:7.6px;font-family:'Liberation Mono',monospace;left:767.20px;font-weight:bold;color:#1c1c1c;letter-spacing:.34px;-webkit-text-stroke:.15px #1c1c1c">Cadastradas Condominial</div>
<div class="a" style="top:578.36px;font-size:9.5px;font-family:'Liberation Sans',sans-serif;right:362.50px;color:#222;transform:scaleX(.874);transform-origin:100% 50%">101.855</div>
<div class="a" style="top:592.38px;font-size:7.6px;font-family:'Liberation Mono',monospace;left:767.20px;font-weight:bold;color:#1c1c1c;letter-spacing:.34px;-webkit-text-stroke:.15px #1c1c1c">Ativas</div>
<div class="a" style="top:589.46px;font-size:9.5px;font-family:'Liberation Sans',sans-serif;right:362.50px;color:#222;transform:scaleX(.874);transform-origin:100% 50%">207.438</div>
<div class="a" style="top:603.68px;font-size:7.6px;font-family:'Liberation Mono',monospace;left:767.20px;font-weight:bold;color:#1c1c1c;letter-spacing:.34px;-webkit-text-stroke:.15px #1c1c1c">Ativas Convencional</div>
<div class="a" style="top:600.76px;font-size:9.5px;font-family:'Liberation Sans',sans-serif;right:362.50px;color:#222;transform:scaleX(.874);transform-origin:100% 50%">110.625</div>
<div class="a" style="top:614.88px;font-size:7.6px;font-family:'Liberation Mono',monospace;left:767.20px;font-weight:bold;color:#1c1c1c;letter-spacing:.34px;-webkit-text-stroke:.15px #1c1c1c">Ativas Condominial</div>
<div class="a" style="top:611.96px;font-size:9.5px;font-family:'Liberation Sans',sans-serif;right:362.50px;color:#222;transform:scaleX(.874);transform-origin:100% 50%">96.813</div>
<div class="a" style="top:626.28px;font-size:7.6px;font-family:'Liberation Mono',monospace;left:767.20px;font-weight:bold;color:#1c1c1c;letter-spacing:.34px;-webkit-text-stroke:.15px #1c1c1c">Residencial Cadastradas</div>
<div class="a" style="top:623.36px;font-size:9.5px;font-family:'Liberation Sans',sans-serif;right:362.50px;color:#222;transform:scaleX(.874);transform-origin:100% 50%">183.855</div>
<div class="a" style="top:637.78px;font-size:7.6px;font-family:'Liberation Mono',monospace;left:767.20px;font-weight:bold;color:#1c1c1c;letter-spacing:.34px;-webkit-text-stroke:.15px #1c1c1c">Residencial Ativas</div>
<div class="a" style="top:634.86px;font-size:9.5px;font-family:'Liberation Sans',sans-serif;right:362.50px;color:#222;transform:scaleX(.874);transform-origin:100% 50%">177.672</div>
<div class="a" style="top:649.28px;font-size:7.6px;font-family:'Liberation Mono',monospace;left:767.20px;font-weight:bold;color:#1c1c1c;letter-spacing:.34px;-webkit-text-stroke:.15px #1c1c1c">Comercial Ativas</div>
<div class="a" style="top:646.36px;font-size:9.5px;font-family:'Liberation Sans',sans-serif;right:362.50px;color:#222;transform:scaleX(.874);transform-origin:100% 50%">24.640</div>
<div class="a" style="top:660.18px;font-size:7.6px;font-family:'Liberation Mono',monospace;left:767.20px;font-weight:bold;color:#1c1c1c;letter-spacing:.34px;-webkit-text-stroke:.15px #1c1c1c">Industrial Ativas</div>
<div class="a" style="top:657.26px;font-size:9.5px;font-family:'Liberation Sans',sans-serif;right:362.50px;color:#222;transform:scaleX(.874);transform-origin:100% 50%">1.048</div>
<div class="a" style="top:671.68px;font-size:7.6px;font-family:'Liberation Mono',monospace;left:767.20px;font-weight:bold;color:#1c1c1c;letter-spacing:.34px;-webkit-text-stroke:.15px #1c1c1c">Publica Ativas</div>
<div class="a" style="top:668.76px;font-size:9.5px;font-family:'Liberation Sans',sans-serif;right:362.50px;color:#222;transform:scaleX(.874);transform-origin:100% 50%">4.016</div>
<div class="a" style="top:682.88px;font-size:7.6px;font-family:'Liberation Mono',monospace;left:767.20px;font-weight:bold;color:#1c1c1c;letter-spacing:.34px;-webkit-text-stroke:.15px #1c1c1c">Rural Ativas</div>
<div class="a" style="top:679.96px;font-size:9.5px;font-family:'Liberation Sans',sans-serif;right:362.50px;color:#222;transform:scaleX(.874);transform-origin:100% 50%">62</div>
<div class="a" style="top:694.38px;font-size:7.6px;font-family:'Liberation Mono',monospace;left:767.20px;font-weight:bold;color:#1c1c1c;letter-spacing:.34px;-webkit-text-stroke:.15px #1c1c1c">Faturadas Medidas</div>
<div class="a" style="top:691.46px;font-size:9.5px;font-family:'Liberation Sans',sans-serif;right:362.50px;color:#222;transform:scaleX(.874);transform-origin:100% 50%">168.504</div>
<div class="a" style="top:705.58px;font-size:7.6px;font-family:'Liberation Mono',monospace;left:767.20px;font-weight:bold;color:#1c1c1c;letter-spacing:.34px;-webkit-text-stroke:.15px #1c1c1c">Faturadas Não Medidas</div>
<div class="a" style="top:702.66px;font-size:9.5px;font-family:'Liberation Sans',sans-serif;right:362.50px;color:#222;transform:scaleX(.874);transform-origin:100% 50%">37.573</div>
<div class="a" style="top:719.28px;font-size:7.6px;font-family:'Liberation Mono',monospace;left:672.70px;font-weight:bold;color:#1c1c1c;letter-spacing:.34px;-webkit-text-stroke:.15px #1c1c1c">Total do Volume Faturado Residencial</div>
<div class="a" style="top:716.36px;font-size:9.5px;font-family:'Liberation Sans',sans-serif;right:362.50px;color:#222;transform:scaleX(.874);transform-origin:100% 50%">1.942.463</div>
<div class="a" style="top:730.68px;font-size:7.6px;font-family:'Liberation Mono',monospace;left:796.20px;font-weight:bold;color:#1c1c1c;letter-spacing:.34px;-webkit-text-stroke:.15px #1c1c1c">Comercial</div>
<div class="a" style="top:727.76px;font-size:9.5px;font-family:'Liberation Sans',sans-serif;right:362.50px;color:#222;transform:scaleX(.874);transform-origin:100% 50%">288.060</div>
<div class="a" style="top:741.58px;font-size:7.6px;font-family:'Liberation Mono',monospace;left:796.20px;font-weight:bold;color:#1c1c1c;letter-spacing:.34px;-webkit-text-stroke:.15px #1c1c1c">Industrial</div>
<div class="a" style="top:738.66px;font-size:9.5px;font-family:'Liberation Sans',sans-serif;right:362.50px;color:#222;transform:scaleX(.874);transform-origin:100% 50%">278.822</div>
<div class="a" style="top:752.38px;font-size:7.6px;font-family:'Liberation Mono',monospace;left:796.20px;font-weight:bold;color:#1c1c1c;letter-spacing:.34px;-webkit-text-stroke:.15px #1c1c1c">Publico</div>
<div class="a" style="top:749.46px;font-size:9.5px;font-family:'Liberation Sans',sans-serif;right:362.50px;color:#222;transform:scaleX(.874);transform-origin:100% 50%">178.571</div>
<div class="a" style="top:763.98px;font-size:7.6px;font-family:'Liberation Mono',monospace;left:796.20px;font-weight:bold;color:#1c1c1c;letter-spacing:.34px;-webkit-text-stroke:.15px #1c1c1c">Geral</div>
<div class="a" style="top:761.06px;font-size:9.5px;font-family:'Liberation Sans',sans-serif;right:362.50px;color:#222;transform:scaleX(.874);transform-origin:100% 50%">2.687.916</div>
<div class="a" style="top:776.58px;font-size:7.6px;font-family:'Liberation Mono',monospace;left:672.70px;font-weight:bold;color:#1c1c1c;letter-spacing:.34px;-webkit-text-stroke:.15px #1c1c1c">Total do Faturamento Residencial</div>
<div class="a" style="top:773.66px;font-size:9.5px;font-family:'Liberation Sans',sans-serif;right:362.50px;color:#222;transform:scaleX(.874);transform-origin:100% 50%">3.561.013,18</div>
<div class="a" style="top:786.68px;font-size:7.6px;font-family:'Liberation Mono',monospace;left:776.60px;font-weight:bold;color:#1c1c1c;letter-spacing:.34px;-webkit-text-stroke:.15px #1c1c1c">Comercial</div>
<div class="a" style="top:783.76px;font-size:9.5px;font-family:'Liberation Sans',sans-serif;right:362.50px;color:#222;transform:scaleX(.874);transform-origin:100% 50%">1.172.246,55</div>
<div class="a" style="top:797.48px;font-size:7.6px;font-family:'Liberation Mono',monospace;left:776.60px;font-weight:bold;color:#1c1c1c;letter-spacing:.34px;-webkit-text-stroke:.15px #1c1c1c">Industrial</div>
<div class="a" style="top:794.56px;font-size:9.5px;font-family:'Liberation Sans',sans-serif;right:362.50px;color:#222;transform:scaleX(.874);transform-origin:100% 50%">1.170.291,31</div>
<div class="a" style="top:807.88px;font-size:7.6px;font-family:'Liberation Mono',monospace;left:776.60px;font-weight:bold;color:#1c1c1c;letter-spacing:.34px;-webkit-text-stroke:.15px #1c1c1c">Publico</div>
<div class="a" style="top:804.96px;font-size:9.5px;font-family:'Liberation Sans',sans-serif;right:362.50px;color:#222;transform:scaleX(.874);transform-origin:100% 50%">688.697,45</div>
<div class="a" style="top:818.38px;font-size:7.6px;font-family:'Liberation Mono',monospace;left:776.60px;font-weight:bold;color:#1c1c1c;letter-spacing:.34px;-webkit-text-stroke:.15px #1c1c1c">Direto</div>
<div class="a" style="top:815.46px;font-size:9.5px;font-family:'Liberation Sans',sans-serif;right:362.50px;color:#222;transform:scaleX(.874);transform-origin:100% 50%">6.592.248,49</div>
<div class="a" style="top:829.98px;font-size:7.6px;font-family:'Liberation Mono',monospace;left:672.70px;font-weight:bold;color:#1c1c1c;letter-spacing:.34px;-webkit-text-stroke:.15px #1c1c1c">Receita Operacional Total</div>
<div class="a" style="top:827.06px;font-size:9.5px;font-family:'Liberation Sans',sans-serif;right:362.50px;color:#222;transform:scaleX(.874);transform-origin:100% 50%">41.577.430,91</div>
<div class="a" style="top:841.48px;font-size:7.6px;font-family:'Liberation Mono',monospace;left:772.00px;font-weight:bold;color:#1c1c1c;letter-spacing:.34px;-webkit-text-stroke:.15px #1c1c1c">Direta</div>
<div class="a" style="top:838.56px;font-size:9.5px;font-family:'Liberation Sans',sans-serif;right:362.50px;color:#222;transform:scaleX(.874);transform-origin:100% 50%">39.571.768,54</div>
<div class="a" style="top:852.68px;font-size:7.6px;font-family:'Liberation Mono',monospace;left:772.00px;font-weight:bold;color:#1c1c1c;letter-spacing:.34px;-webkit-text-stroke:.15px #1c1c1c">Indireta</div>
<div class="a" style="top:849.76px;font-size:9.5px;font-family:'Liberation Sans',sans-serif;right:362.50px;color:#222;transform:scaleX(.874);transform-origin:100% 50%">2.005.662,37</div>
<div class="a" style="top:864.38px;font-size:7.6px;font-family:'Liberation Mono',monospace;left:672.70px;font-weight:bold;color:#1c1c1c;letter-spacing:.34px;-webkit-text-stroke:.15px #1c1c1c">Saldo de Contas a Receber Total</div>
<div class="a" style="top:861.46px;font-size:9.5px;font-family:'Liberation Sans',sans-serif;right:362.50px;color:#222;transform:scaleX(.874);transform-origin:100% 50%">258.200.238,71</div>
<div class="a" style="top:875.58px;font-size:7.6px;font-family:'Liberation Mono',monospace;left:806.00px;font-weight:bold;color:#1c1c1c;letter-spacing:.34px;-webkit-text-stroke:.15px #1c1c1c">Particular</div>
<div class="a" style="top:872.66px;font-size:9.5px;font-family:'Liberation Sans',sans-serif;right:362.50px;color:#222;transform:scaleX(.874);transform-origin:100% 50%">114.616.943,37</div>
<div class="a" style="top:887.08px;font-size:7.6px;font-family:'Liberation Mono',monospace;left:806.00px;font-weight:bold;color:#1c1c1c;letter-spacing:.34px;-webkit-text-stroke:.15px #1c1c1c">Público</div>
<div class="a" style="top:884.16px;font-size:9.5px;font-family:'Liberation Sans',sans-serif;right:362.50px;color:#222;transform:scaleX(.874);transform-origin:100% 50%">143.582.021,20</div>
<div class="a" style="top:898.48px;font-size:7.6px;font-family:'Liberation Mono',monospace;left:761.50px;font-weight:bold;color:#1c1c1c;letter-spacing:.34px;-webkit-text-stroke:.15px #1c1c1c">NUMERO HIDROMETROS</div>
<div class="a" style="top:896.76px;font-size:9.5px;font-family:'Liberation Sans',sans-serif;right:761.00px;color:#222;transform:scaleX(.874);transform-origin:100% 50%">7.111</div>
</body></html>
